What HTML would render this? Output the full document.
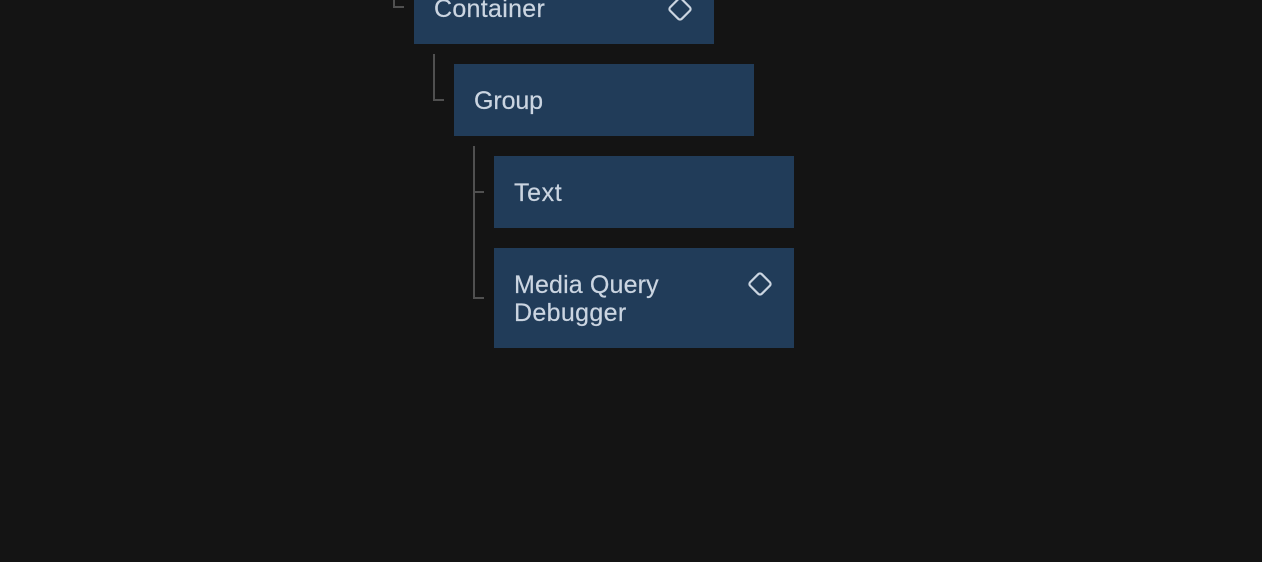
<!DOCTYPE html>
<html>
<head>
<meta charset="utf-8">
<style>
html,body{margin:0;padding:0;background:#141414;width:1262px;height:562px;overflow:hidden}
.b{position:absolute;background:#213c59;width:300px}
.l{position:absolute;background:#505050}
.t{position:absolute;font-family:"Liberation Sans",sans-serif;font-size:25px;line-height:28px;color:#cbd5e1;white-space:nowrap;-webkit-text-stroke:.2px #cbd5e1}
svg{position:absolute}
</style>
</head>
<body>
<div class="b" style="left:414px;top:-28px;height:72px"></div>
<div class="b" style="left:454px;top:64px;height:72px"></div>
<div class="b" style="left:494px;top:156px;height:72px"></div>
<div class="b" style="left:494px;top:248px;height:100px"></div>

<div class="l" style="left:393px;top:0;width:2px;height:8px"></div>
<div class="l" style="left:393px;top:6px;width:11px;height:2px"></div>
<div class="l" style="left:433px;top:54px;width:2px;height:47px"></div>
<div class="l" style="left:433px;top:99px;width:11px;height:2px"></div>
<div class="l" style="left:473px;top:146px;width:2px;height:153px"></div>
<div class="l" style="left:473px;top:191px;width:11px;height:2px"></div>
<div class="l" style="left:473px;top:297px;width:11px;height:2px"></div>

<div class="t" style="left:434px;top:-5px;letter-spacing:.3px">Container</div>
<div class="t" style="left:474px;top:87px;letter-spacing:-.1px">Group</div>
<div class="t" style="left:514px;top:179px;letter-spacing:.6px">Text</div>
<div class="t" style="left:514px;top:271px;letter-spacing:.15px">Media Query</div>
<div class="t" style="left:514px;top:299px;letter-spacing:.35px">Debugger</div>

<svg style="left:666px;top:-5.5px" width="28" height="28" viewBox="0 0 28 28"><rect x="5.8" y="5.8" width="16.4" height="16.4" rx="2.5" transform="rotate(45 14 14)" fill="none" stroke="#cbd5e1" stroke-width="2.2"/></svg>
<svg style="left:746px;top:270px" width="28" height="28" viewBox="0 0 28 28"><rect x="5.8" y="5.8" width="16.4" height="16.4" rx="2.5" transform="rotate(45 14 14)" fill="none" stroke="#cbd5e1" stroke-width="2.2"/></svg>
</body>
</html>
